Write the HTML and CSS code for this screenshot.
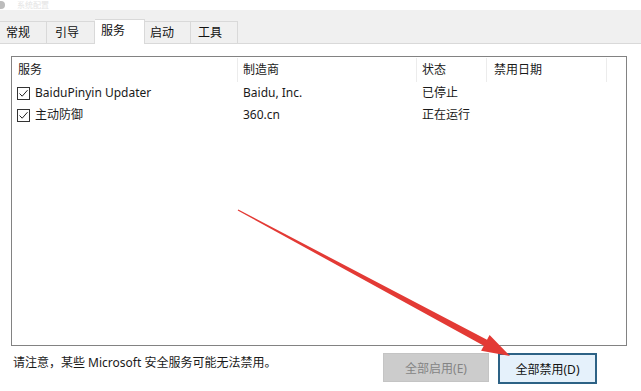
FILE: index.html
```html
<!DOCTYPE html>
<html>
  <head>
    <meta charset="utf-8">
    <link rel="stylesheet" href="styles.css">
  </head>
  <body>
    <div class="window">
      <div class="titlebar">
        <span class="app-icon"></span>
        <span class="title">系统配置</span>
      </div>

      <div class="tabstrip">
        <div class="tab">常规</div>
        <div class="tab">引导</div>
        <div class="tab active">服务</div>
        <div class="tab">启动</div>
        <div class="tab">工具</div>
      </div>

      <div class="page">
        <div class="listbox">
          <div class="row head">
            <div class="cell c1">服务</div>
            <div class="cell c2">制造商</div>
            <div class="cell c3">状态</div>
            <div class="cell c4">禁用日期</div>
            <div class="cell c5"></div>
          </div>
          <div class="row">
            <div class="cell c1"><span class="check"><svg width="11" height="11" viewBox="0 0 11 11"><path d="M1.5 5.5 L4.2 8.2 L9.5 2.2" fill="none" stroke="#222" stroke-width="1"/></svg></span>BaiduPinyin Updater</div>
            <div class="cell c2">Baidu, Inc.</div>
            <div class="cell c3">已停止</div>
            <div class="cell c4"></div>
          </div>
          <div class="row">
            <div class="cell c1"><span class="check"><svg width="11" height="11" viewBox="0 0 11 11"><path d="M1.5 5.5 L4.2 8.2 L9.5 2.2" fill="none" stroke="#222" stroke-width="1"/></svg></span>主动防御</div>
            <div class="cell c2">360.cn</div>
            <div class="cell c3">正在运行</div>
            <div class="cell c4"></div>
          </div>
        </div>

        <div class="footer">
          <div class="note">请注意，某些 Microsoft 安全服务可能无法禁用。</div>
          <button class="btn disabled">全部启用(E)</button>
          <button class="btn focused">全部禁用(D)</button>
        </div>
      </div>

      <!-- red annotation arrow drawn over the dialog -->
      <svg class="arrow" width="641" height="391" viewBox="0 0 641 391">
        <polygon points="237.7,210.5 238.3,209.5 487.0,339.8 489.6,334.9 510,356 481.1,350.7 483.8,345.8" fill="#e33a35"/>
      </svg>
    </div>
  </body>
</html>
```

FILE: styles.css
```css
html, body {
  margin: 0;
  padding: 0;
  background: #fff;
}

.window {
  position: relative;
  width: 641px;
  height: 391px;
  overflow: hidden;
  font-family: "Noto Sans", "Noto Sans CJK SC", sans-serif;
  font-size: 12px;
  color: #1a1a1a;
}

.titlebar {
  height: 10px;
  overflow: hidden;
  display: flex;
  align-items: center;
}
  .app-icon {
    width: 8px;
    height: 8px;
    margin-left: -3px;
    border-radius: 50%;
    background: #bcbcbc;
  }
  .title {
    margin-left: 12px;
    color: #e4e4e4;
    font-size: 8px;
    line-height: 10px;
  }

.tabstrip {
  height: 33px;
  background: #f0f0f0;
  border-bottom: 1px solid #d9d9d9;
  display: flex;
  align-items: flex-end;
}

.tab {
  box-sizing: border-box;
  height: 22px;
  padding: 0 6px;
  line-height: 21px;
  border: 1px solid #d9d9d9;
  border-bottom: none;
  border-left: none;
  background: #f0f0f0;
  color: #111;
}
  .tab:nth-child(1) { width: 47px; }
  .tab:nth-child(2) { width: 48px; padding-left: 8px; }
  .tab:nth-child(3) { width: 50px; }
  .tab:nth-child(4) { width: 46px; padding-left: 5px; }
  .tab:nth-child(5) { width: 47px; padding-left: 7px; }

.tab.active {
  height: 25px;
  margin-bottom: -1px;
  line-height: 22px;
  background: #fff;
  padding-bottom: 3px;
}

.page {
  padding: 12px 0 0 11px;
}

.listbox {
  box-sizing: border-box;
  width: 616px;
  height: 290px;
  padding-top: 1px;
  border: 1px solid #828282;
  background: #fff;
}

.row {
  display: flex;
  height: 22px;
  line-height: 22px;
  white-space: nowrap;
}

.row.head {
  height: 24px;
  line-height: 24px;
}

.cell {
  box-sizing: border-box;
  overflow: hidden;
}
  .c1 { width: 226px; padding-left: 5px; display: flex; align-items: center; }
  .c2 { width: 179px; padding-left: 5px; }
  .c3 { width: 70px; padding-left: 5px; }
  .c4 { width: 120px; padding-left: 7px; }
  .c5 { flex: 1; }

.head .c1 { padding-left: 6px; }
.head .cell { border-right: 1px solid #ececec; }
.head .c5 { border-right: none; }

.check {
  box-sizing: border-box;
  width: 13px;
  height: 13px;
  margin-right: 5px;
  border: 1px solid #333;
  display: flex;
  align-items: center;
  justify-content: center;
}

.footer {
  display: flex;
  align-items: flex-start;
  padding-top: 7px;
  margin-left: 2px;
}

.note {
  width: 370px;
  line-height: 16px;
  padding-top: 2px;
}

.btn {
  box-sizing: border-box;
  font-family: "Noto Sans", "Noto Sans CJK SC", sans-serif;
  font-size: 12px;
  padding: 0;
}
.btn.disabled {
  width: 106px;
  height: 29px;
  background: #cccccc;
  border: 1px solid #c4c4c4;
  color: #848484;
}
.btn.focused {
  width: 99px;
  height: 31px;
  margin-left: 9px;
  background: #e5f1fb;
  border: 2px solid #2d6285;
  color: #111;
}

.arrow {
  position: absolute;
  left: 0;
  top: 0;
  pointer-events: none;
}
```
